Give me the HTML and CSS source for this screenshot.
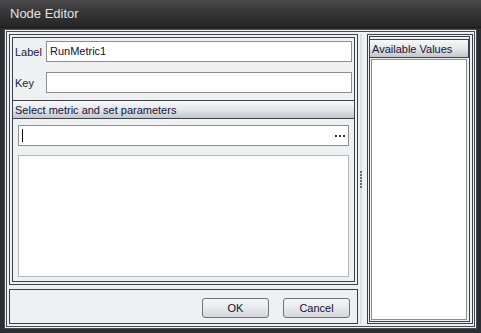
FILE: index.html
```html
<!DOCTYPE html>
<html lang="en">
<head>
    <meta charset="UTF-8" />
    <title>Node Editor</title>
    <link rel="stylesheet" href="styles.css">
</head>
<body>
    <div class="window">
        <div class="titlebar">Node Editor</div>
        <div class="client">
            <div class="left-col">
                <div class="group">
                    <div class="group-inner">
                        <div class="field-row">
                            <span class="field-label">Label</span>
                            <div class="text-input">RunMetric1</div>
                        </div>
                        <div class="field-row">
                            <span class="field-label">Key</span>
                            <div class="text-input"></div>
                        </div>
                        <div class="section">
                            <div class="section-header">Select metric and set parameters</div>
                            <div class="section-body">
                                <div class="picker">
                                    <span class="caret"></span>
                                    <span class="ellipsis"></span>
                                </div>
                                <div class="params"></div>
                            </div>
                        </div>
                    </div>
                </div>
                <div class="button-bar">
                    <button class="btn">OK</button>
                    <button class="btn">Cancel</button>
                </div>
            </div>
            <div class="splitter">
                <div class="grip"></div>
            </div>
            <div class="right-col">
                <div class="right-inner">
                    <div class="values-header">Available Values</div>
                    <div class="values-list"></div>
                </div>
            </div>
        </div>
    </div>
</body>
</html>
```

FILE: styles.css
```css
* {
    margin: 0;
    padding: 0;
    box-sizing: border-box;
}

body {
    font-family: 'Liberation Sans', Arial, sans-serif;
    font-size: 11px;
    color: #1a1a3a;
    background: #2c2e32;
    width: 481px;
    height: 333px;
    overflow: hidden;
}

.window {
    width: 481px;
    height: 333px;
    display: flex;
    flex-direction: column;
}

.titlebar {
    height: 28px;
    padding: 6px 0 0 10px;
    font-size: 13px;
    color: #e4e4e4;
    background: linear-gradient(#4a4a4a 0%, #353535 50%, #262626 100%);
    border-bottom: 1px solid #1a1a1a;
}

.client {
    flex: 1;
    margin: 1px 4px 4px 4px;
    background: #eef0f2;
    border: 3px double #474b53;
    padding: 2px 1px 2px 2px;
    display: flex;
}

/* Left column */
.left-col {
    width: 349px;
    display: flex;
    flex-direction: column;
    gap: 4px;
}

.group {
    flex: 1;
    border: 1px solid #3c4048;
    padding: 2px;
    display: flex;
}

.group-inner {
    flex: 1;
    border: 1px solid #3c4048;
    display: flex;
    flex-direction: column;
    padding-top: 3px;
}

.field-row {
    display: flex;
    align-items: center;
    padding: 0 2px 0 2px;
}

.field-row + .field-row {
    margin-top: 10px;
}

.field-label {
    width: 31px;
}

.text-input {
    flex: 1;
    height: 21px;
    background: #fff;
    border: 1px solid #8c8e92;
    padding: 3px 0 0 3px;
    color: #101030;
}

.section {
    flex: 1;
    display: flex;
    flex-direction: column;
    margin-top: 7px;
}

.section-header {
    height: 19px;
    padding: 3px 0 0 2px;
    border-top: 1px solid #3c4048;
    border-bottom: 1px solid #3c4048;
    background: linear-gradient(#f7f8f9 0%, #e4e6e9 50%, #c3c6cb 100%);
    color: #14143a;
}

.section-body {
    flex: 1;
    display: flex;
    flex-direction: column;
    padding: 6px 5px 4px 5px;
    gap: 9px;
}

.picker {
    height: 21px;
    background: #fff;
    border: 1px solid #8c8e92;
    display: flex;
    align-items: center;
    justify-content: space-between;
    padding: 0 3px 0 3px;
}

.caret {
    width: 1px;
    height: 13px;
    background: #000;
}

.ellipsis {
    width: 10px;
    height: 2px;
    background: repeating-linear-gradient(90deg, #35373b 0 2px, transparent 2px 4px);
}

.params {
    flex: 1;
    background: #fff;
    border: 1px solid #b4b6b8;
}

.button-bar {
    height: 35px;
    border: 1px solid #3c4048;
    display: flex;
    justify-content: flex-end;
    align-items: center;
    gap: 14px;
    padding: 2px 7px 0 0;
}

.btn {
    width: 67px;
    height: 20px;
    font-family: 'Liberation Sans', Arial, sans-serif;
    font-size: 11px;
    color: #10102e;
    border: 1px solid #70747a;
    border-radius: 3px;
    background: linear-gradient(#f5f6f8 0%, #e7e9ec 50%, #d3d6db 100%);
}

/* Splitter */
.splitter {
    width: 9px;
    display: flex;
    padding-left: 2px;
}

.grip {
    width: 2px;
    height: 100%;
    background: #dcdee1;
    position: relative;
}

.grip::after {
    content: "";
    position: absolute;
    left: 0;
    top: 50%;
    width: 2px;
    height: 18px;
    margin-top: -8px;
    background: repeating-linear-gradient(#686c72 0 2px, transparent 2px 3px);
}

/* Right column */
.right-col {
    width: 106px;
    border: 1px solid #3c4048;
    padding: 1px 2px 1px 1px;
    display: flex;
}

.right-inner {
    flex: 1;
    border: 1px solid #3c4048;
    padding-top: 2px;
    display: flex;
    flex-direction: column;
    gap: 1px;
}

.values-header {
    height: 19px;
    padding: 3px 0 0 2px;
    border: 1px solid #3c4048;
    border-left: none;
    background: linear-gradient(#f7f8f9 0%, #e4e6e9 50%, #c3c6cb 100%);
    color: #14143a;
}

.values-list {
    flex: 1;
    background: #fff;
    border: 1px solid #8c8e92;
    margin: 0 2px 1px 1px;
}
```
